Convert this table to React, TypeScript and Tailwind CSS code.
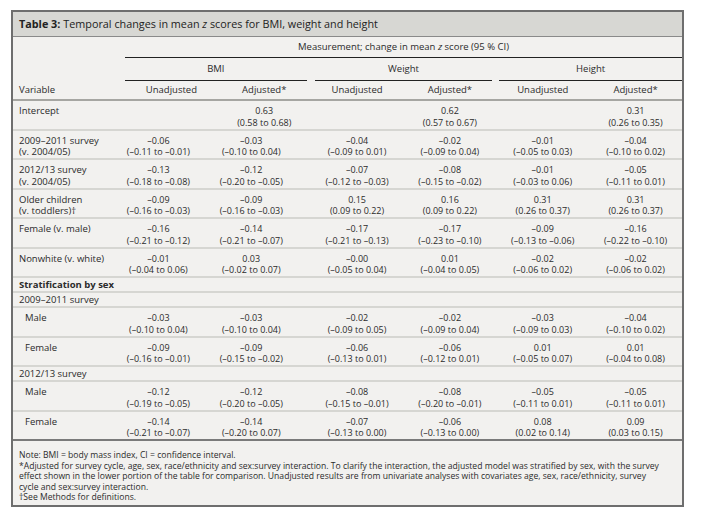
type Cell = [string, string] | null;

type Row =
  | { kind: "data"; label: string[]; indent?: boolean; cells: Cell[]; intercept?: boolean }
  | { kind: "section"; label: string; bold?: boolean };

const rows: Row[] = [
  {
    kind: "data",
    label: ["Intercept"],
    intercept: true,
    cells: [null, ["0.63", "(0.58 to 0.68)"], null, ["0.62", "(0.57 to 0.67)"], null, ["0.31", "(0.26 to 0.35)"]],
  },
  {
    kind: "data",
    label: ["2009–2011 survey", "(v. 2004/05)"],
    cells: [
      ["–0.06", "(–0.11 to –0.01)"],
      ["–0.03", "(–0.10 to 0.04)"],
      ["–0.04", "(–0.09 to 0.01)"],
      ["–0.02", "(–0.09 to 0.04)"],
      ["–0.01", "(–0.05 to 0.03)"],
      ["–0.04", "(–0.10 to 0.02)"],
    ],
  },
  {
    kind: "data",
    label: ["2012/13 survey", "(v. 2004/05)"],
    cells: [
      ["–0.13", "(–0.18 to –0.08)"],
      ["–0.12", "(–0.20 to –0.05)"],
      ["–0.07", "(–0.12 to –0.03)"],
      ["–0.08", "(–0.15 to –0.02)"],
      ["–0.01", "(–0.03 to 0.06)"],
      ["–0.05", "(–0.11 to 0.01)"],
    ],
  },
  {
    kind: "data",
    label: ["Older children", "(v. toddlers)†"],
    cells: [
      ["–0.09", "(–0.16 to –0.03)"],
      ["–0.09", "(–0.16 to –0.03)"],
      ["0.15", "(0.09 to 0.22)"],
      ["0.16", "(0.09 to 0.22)"],
      ["0.31", "(0.26 to 0.37)"],
      ["0.31", "(0.26 to 0.37)"],
    ],
  },
  {
    kind: "data",
    label: ["Female (v. male)"],
    cells: [
      ["–0.16", "(–0.21 to –0.12)"],
      ["–0.14", "(–0.21 to –0.07)"],
      ["–0.17", "(–0.21 to –0.13)"],
      ["–0.17", "(–0.23 to –0.10)"],
      ["–0.09", "(–0.13 to –0.06)"],
      ["–0.16", "(–0.22 to –0.10)"],
    ],
  },
  {
    kind: "data",
    label: ["Nonwhite (v. white)"],
    cells: [
      ["–0.01", "(–0.04 to 0.06)"],
      ["0.03", "(–0.02 to 0.07)"],
      ["–0.00", "(–0.05 to 0.04)"],
      ["0.01", "(–0.04 to 0.05)"],
      ["–0.02", "(–0.06 to 0.02)"],
      ["–0.02", "(–0.06 to 0.02)"],
    ],
  },
  { kind: "section", label: "Stratification by sex", bold: true },
  { kind: "section", label: "2009–2011 survey" },
  {
    kind: "data",
    label: ["Male"],
    indent: true,
    cells: [
      ["–0.03", "(–0.10 to 0.04)"],
      ["–0.03", "(–0.10 to 0.04)"],
      ["–0.02", "(–0.09 to 0.05)"],
      ["–0.02", "(–0.09 to 0.04)"],
      ["–0.03", "(–0.09 to 0.03)"],
      ["–0.04", "(–0.10 to 0.02)"],
    ],
  },
  {
    kind: "data",
    label: ["Female"],
    indent: true,
    cells: [
      ["–0.09", "(–0.16 to –0.01)"],
      ["–0.09", "(–0.15 to –0.02)"],
      ["–0.06", "(–0.13 to 0.01)"],
      ["–0.06", "(–0.12 to 0.01)"],
      ["0.01", "(–0.05 to 0.07)"],
      ["0.01", "(–0.04 to 0.08)"],
    ],
  },
  { kind: "section", label: "2012/13 survey" },
  {
    kind: "data",
    label: ["Male"],
    indent: true,
    cells: [
      ["–0.12", "(–0.19 to –0.05)"],
      ["–0.12", "(–0.20 to –0.05)"],
      ["–0.08", "(–0.15 to –0.01)"],
      ["–0.08", "(–0.20 to –0.01)"],
      ["–0.05", "(–0.11 to 0.01)"],
      ["–0.05", "(–0.11 to 0.01)"],
    ],
  },
  {
    kind: "data",
    label: ["Female"],
    indent: true,
    cells: [
      ["–0.14", "(–0.21 to –0.07)"],
      ["–0.14", "(–0.20 to 0.07)"],
      ["–0.07", "(–0.13 to 0.00)"],
      ["–0.06", "(–0.13 to 0.00)"],
      ["0.08", "(0.02 to 0.14)"],
      ["0.09", "(0.03 to 0.15)"],
    ],
  },
];

export default function App() {
  return (
    <div className="min-h-[529px] bg-white pt-[10px] pl-[11px] font-['Open_Sans',sans-serif] text-[#2b2b2b]">
      <div className="w-[673px] border-2 border-[#6e6e6e] bg-[#f2f1ef]">
        {/* Title */}
        <div className="h-[25px] flex items-center pl-[6px] bg-[#d7d7d3] border-b border-[#8a8a8a] text-[10.8px] text-[#222]">
          <span className="font-bold">Table 3:</span>
          <span className="ml-[3px]">
            Temporal changes in mean <i>z</i> scores for BMI, weight and height
          </span>
        </div>

        <table className="w-full table-fixed border-collapse text-[9.5px]">
          <colgroup>
            <col className="w-[112px]" />
            <col />
            <col />
            <col />
            <col />
            <col />
            <col />
          </colgroup>
          <thead>
            <tr>
              <th className="p-0 font-normal"></th>
              <th colSpan={6} className="h-[20px] p-0 font-normal border-b border-[#222]">
                <span className="block leading-[20px]">
                  Measurement; change in mean <i>z</i> score (95 % CI)
                </span>
              </th>
            </tr>
            <tr>
              <th className="p-0 font-normal"></th>
              <th colSpan={2} className="p-0 font-normal">
                <div className="mr-[4px] h-[23px] leading-[22px] border-b border-[#222]">BMI</div>
              </th>
              <th colSpan={2} className="p-0 font-normal">
                <div className="mx-[4px] h-[23px] leading-[22px] border-b border-[#222]">Weight</div>
              </th>
              <th colSpan={2} className="p-0 font-normal">
                <div className="ml-[3px] h-[23px] leading-[22px] border-b border-[#222]">Height</div>
              </th>
            </tr>
            <tr className="border-b-2 border-[#a6a6a2]">
              <th className="h-[19px] pl-[6px] text-left font-normal">Variable</th>
              <th className="font-normal">Unadjusted</th>
              <th className="font-normal">Adjusted*</th>
              <th className="font-normal">Unadjusted</th>
              <th className="font-normal">Adjusted*</th>
              <th className="font-normal">Unadjusted</th>
              <th className="font-normal">Adjusted*</th>
            </tr>
          </thead>
          <tbody>
            {rows.map((row, i) => {
              const last = i === rows.length - 1;
              if (row.kind === "section") {
                return (
                  <tr key={i} className="border-b-2 border-[#d6d6d2]">
                    <td
                      colSpan={7}
                      className={
                        "h-[14px] pl-[6px] p-0 leading-[13px] " +
                        (row.bold ? "font-bold" : "")
                      }
                    >
                      {row.label}
                    </td>
                  </tr>
                );
              }
              return (
                <tr
                  key={i}
                  className={last ? "border-b-2 border-[#7a7a7a]" : "border-b-2 border-[#d6d6d2]"}
                >
                  <td
                    className={
                      "align-top pt-[4px] pb-[0.5px] leading-[11.5px] " +
                      (row.indent ? "pl-[12px]" : "pl-[6px]")
                    }
                  >
                    {row.label.map((l, j) => (
                      <div key={j}>{l}</div>
                    ))}
                  </td>
                  {row.cells.map((c, j) => (
                    <td
                      key={j}
                      className={
                        "align-top text-center pt-[4px] pb-[0.5px] leading-[11.5px] text-[9px] " +
                        (j < 2 && !row.intercept ? "pr-[26px]" : "")
                      }
                    >
                      {c && (
                        <>
                          <div>{c[0]}</div>
                          <div>{c[1]}</div>
                        </>
                      )}
                    </td>
                  ))}
                </tr>
              );
            })}
          </tbody>
        </table>

        {/* Notes */}
        <div className="pl-[6px] pt-[9px] pb-[2px] text-[8.6px] leading-[10.5px] whitespace-nowrap">
          <div>Note: BMI = body mass index, CI = confidence interval.</div>
          <div>
            *Adjusted for survey cycle, age, sex, race/ethnicity and sex:survey interaction. To clarify the
            interaction, the adjusted model was stratified by sex, with the survey
          </div>
          <div>
            effect shown in the lower portion of the table for comparison. Unadjusted results are from
            univariate analyses with covariates age, sex, race/ethnicity, survey
          </div>
          <div>cycle and sex:survey interaction.</div>
          <div>†See Methods for definitions.</div>
        </div>
      </div>
    </div>
  );
}
